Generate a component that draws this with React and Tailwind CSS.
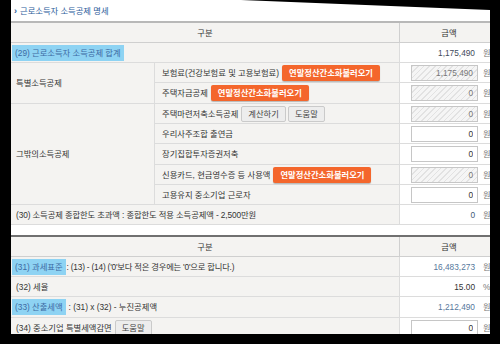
import React from 'react';

// Label cell on the grey band (left and middle columns).
const Label = ({ children, className = '' }) => (
  <div className={`flex items-center border-b border-r border-[#dcdcdc] bg-[#f4f3f1] ${className}`}>{children}</div>
);

const OrangeBtn = ({ children }) => (
  <span className="ml-[3px] inline-flex h-[16px] items-center rounded-[2px] bg-[#f4662c] px-[7px] font-bold text-white shadow-[0_1px_1px_rgba(0,0,0,0.25)]">
    {children}
  </span>
);

const GrayBtn = ({ children, className = '' }) => (
  <span className={`inline-flex h-[16px] items-center rounded-[2px] border border-[#cacaca] bg-[#ededed] px-[6px] text-[#444] ${className}`}>
    {children}
  </span>
);

const Highlight = ({ children }) => (
  <span className="bg-[#8ed3f3] px-[3px] leading-[16px] text-[#3d6aa3]">{children}</span>
);

// Amount column: plain number, white input or hatched read-only input.
const Amount = ({ value, type = 'text', unit = '원', color = 'text-[#333]' }) => (
  <div className="flex items-center border-b border-[#dcdcdc] bg-white pl-[11px]">
    {type === 'text' ? (
      <span className={`w-[67px] pr-[3px] text-right ${color}`}>{value}</span>
    ) : (
      <input
        readOnly
        value={value}
        className={`h-[16px] w-[67px] border border-[#c6c6c6] px-[4px] text-right outline-none ${
          type === 'disabled'
            ? 'bg-[image:repeating-linear-gradient(135deg,#e2e2e2_0_1px,#f5f5f5_1px_4px)] text-[#777]'
            : 'bg-white text-[#333]'
        }`}
      />
    )}
    <span className="ml-[5px] text-[#777]">{unit}</span>
  </div>
);

const App = () => {
  return (
    <div className="h-[344px] w-[500px] overflow-hidden bg-black font-['Liberation_Sans','Noto_Sans_CJK_KR',sans-serif] text-[8.3px] leading-[12px] text-[#333]">
      <div className="ml-[11px] h-[334px] w-[479px] overflow-hidden bg-white [clip-path:polygon(0_0,230px_0,479px_10px,479px_100%,0_100%)]">
        {/* Title */}
        <div className="flex h-[21px] items-center pl-[3px] text-[#2c5c9a]">
          <span className="mr-[3px] text-[9px] font-bold">›</span>
          근로소득자 소득공제 명세
        </div>

        {/* Table 1 */}
        <div className="grid w-[487px] grid-cols-[144px_245px_98px] grid-rows-[20px_20px_20px_21px_20px_20px_21px_20px_20px_20px] border-t-2 border-[#b8b8b8]">
          <div className="col-span-2 flex items-center justify-center border-b border-r border-[#cfcfcf] bg-[#f4f3f1]">구분</div>
          <div className="flex items-center justify-center border-b border-[#cfcfcf] bg-[#f4f3f1]">금액</div>

          <Label className="col-span-2 pl-[1px]">
            <Highlight>(29) 근로소득자 소득공제 합계</Highlight>
          </Label>
          <Amount value="1,175,490" color="text-[#3f4a5a]" />

          <Label className="row-span-2 pl-[5px]">특별소득공제</Label>
          <Label className="pl-[7px]">
            보험료(건강보험료 및 고용보험료)<OrangeBtn>연말정산간소화불러오기</OrangeBtn>
          </Label>
          <Amount value="1,175,490" type="disabled" />
          <Label className="pl-[7px]">
            주택자금공제<OrangeBtn>연말정산간소화불러오기</OrangeBtn>
          </Label>
          <Amount value="0" type="disabled" />

          <Label className="row-span-5 pl-[5px]">그밖의소득공제</Label>
          <Label className="pl-[7px]">
            주택마련저축소득공제
            <GrayBtn className="ml-[3px]">계산하기</GrayBtn>
            <GrayBtn className="ml-[2px]">도움말</GrayBtn>
          </Label>
          <Amount value="0" type="disabled" />
          <Label className="pl-[7px]">우리사주조합 출연금</Label>
          <Amount value="0" type="input" />
          <Label className="pl-[7px]">장기집합투자증권저축</Label>
          <Amount value="0" type="input" />
          <Label className="pl-[7px]">
            신용카드, 현금영수증 등 사용액<OrangeBtn>연말정산간소화불러오기</OrangeBtn>
          </Label>
          <Amount value="0" type="disabled" />
          <Label className="pl-[7px]">고용유지 중소기업 근로자</Label>
          <Amount value="0" type="input" />

          <Label className="col-span-2 pl-[5px] tracking-[-0.1px]">(30) 소득공제 종합한도 초과액 : 종합한도 적용 소득공제액 - 2,500만원</Label>
          <Amount value="0" color="text-[#3f5a78]" />
        </div>

        {/* Table 2 */}
        <div className="mt-[10px] grid w-[487px] grid-cols-[389px_98px] grid-rows-[20px_20px_20px_21px_20px] border-t-2 border-[#707070]">
          <div className="flex items-center justify-center border-b border-r border-[#cfcfcf] bg-[#f4f3f1]">구분</div>
          <div className="flex items-center justify-center border-b border-[#cfcfcf] bg-[#f4f3f1]">금액</div>

          <Label className="pl-[1px]">
            <Highlight>(31) 과세표준</Highlight>
            <span className="ml-[1px] tracking-[-0.2px]">: (13) - (14) ('0'보다 적은 경우에는 '0'으로 합니다.)</span>
          </Label>
          <Amount value="16,483,273" color="text-[#56789c]" />

          <Label className="pl-[5px]">(32) 세율</Label>
          <Amount value="15.00" unit="%" />

          <Label className="pl-[1px]">
            <Highlight>(33) 산출세액</Highlight>
            <span className="ml-[3px]">: (31) x (32) - 누진공제액</span>
          </Label>
          <Amount value="1,212,490" color="text-[#56789c]" />

          <Label className="pl-[5px]">
            (34) 중소기업 특별세액감면
            <GrayBtn className="ml-[3px]">도움말</GrayBtn>
          </Label>
          <Amount value="0" type="input" />
        </div>
      </div>
    </div>
  );
};

export default App;
